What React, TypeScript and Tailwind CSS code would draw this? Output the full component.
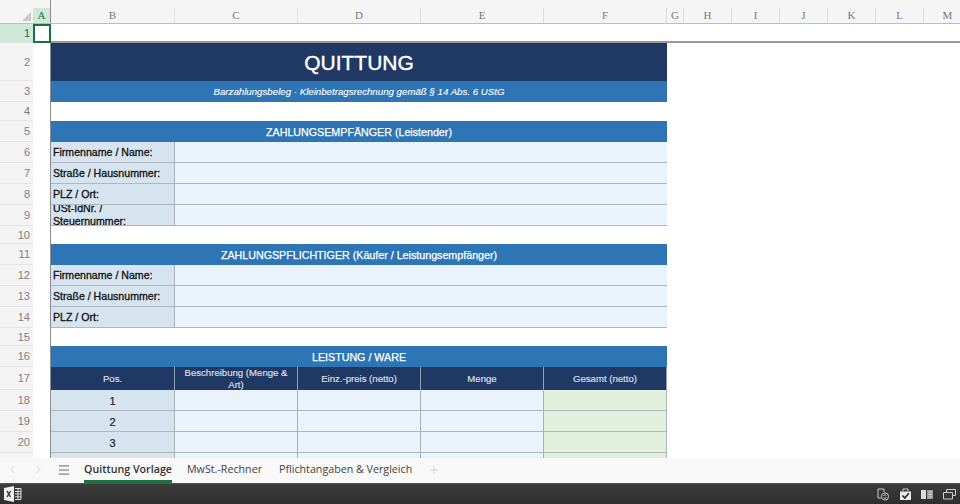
import { ReactNode } from 'react'
import { ChevronLeft, ChevronRight, Menu, Plus } from 'lucide-react'

const COLUMNS: [string, string][] = [
  ['B', 'w-[124px]'], ['C', 'w-[123px]'], ['D', 'w-[123px]'], ['E', 'w-[123px]'], ['F', 'w-[123px]'],
  ['G', 'w-[17px]'], ['H', 'w-[48px]'], ['I', 'w-[48px]'], ['J', 'w-[48px]'], ['K', 'w-[48px]'], ['L', 'w-[48px]'], ['M', 'w-[48px]'],
]

function Row({ num, h, active, children }: { num?: number; h: string; active?: boolean; children?: ReactNode }) {
  return (
    <div className={`flex shrink-0 ${h}`}>
      <div className={`w-[33px] shrink-0 flex items-center justify-end pr-[3px] pt-[1px] text-[11px] border-b border-[#e4e4e4] ${active ? 'bg-[#cfe8d8] text-[#1f6b43]' : 'bg-[#f4f4f4] text-[#808080]'}`}>{num}</div>
      <div className="w-[17px] shrink-0 bg-white" />
      <div className="w-px shrink-0 bg-[#8c8c8c]" />
      <div className="flex flex-1 min-w-0 bg-white">{children}</div>
    </div>
  )
}

function Band({ children, className }: { children: ReactNode; className: string }) {
  return <div className={`w-[616px] flex items-center justify-center pt-[1px] text-white ${className}`}>{children}</div>
}

function LabelRow({ num, h, label, tight }: { num: number; h: string; label: string; tight?: boolean }) {
  return (
    <Row num={num} h={h}>
      <div className={`w-[123px] shrink-0 bg-[#d6e4ef] border-b border-[#aeb7bf] flex items-center pl-[2px] text-[10.6px] text-[#111] [-webkit-text-stroke:0.3px_#111] overflow-hidden ${tight ? 'leading-[13px]' : 'pt-[1px]'}`}>{label}</div>
      <div className="w-px shrink-0 bg-[#a8b0b8]" />
      <div className="w-[492px] bg-[#eaf2fb] border-b border-[#aeb7bf]" />
    </Row>
  )
}

function ItemRow({ num, pos }: { num?: number; pos: string }) {
  return (
    <Row num={num} h="h-[21px]">
      <div className="w-[123px] shrink-0 bg-[#d6e4ef] border-b border-[#aeb7bf] flex items-center justify-center pt-[2px] text-[11px] text-[#222] [-webkit-text-stroke:0.2px_#222]">{pos}</div>
      <div className="w-px shrink-0 bg-[#a8b0b8]" />
      <div className="w-[122px] shrink-0 bg-[#eaf2fb] border-b border-[#aeb7bf]" />
      <div className="w-px shrink-0 bg-[#a8b0b8]" />
      <div className="w-[122px] shrink-0 bg-[#eaf2fb] border-b border-[#aeb7bf]" />
      <div className="w-px shrink-0 bg-[#a8b0b8]" />
      <div className="w-[122px] shrink-0 bg-[#eaf2fb] border-b border-[#aeb7bf]" />
      <div className="w-px shrink-0 bg-[#a8b0b8]" />
      <div className="w-[123px] shrink-0 bg-[#e2efda] border-b border-r border-[#aeb7bf]" />
    </Row>
  )
}

function Head({ w, children }: { w: string; children: ReactNode }) {
  return <div className={`${w} shrink-0 bg-[#1f3864] border-r border-[#8fa0b5] flex items-center justify-center text-center px-[6px] pt-[1px] text-[9.6px] leading-[12px] text-[#d9dee6] [-webkit-text-stroke:0.2px_#d9dee6]`}>{children}</div>
}

export default function App() {
  return (
    <div className="w-[960px] h-[504px] overflow-hidden flex flex-col bg-white font-['Liberation_Sans',Arial,sans-serif]">
      <div className="h-[24px] shrink-0 flex bg-[#f5f5f5] border-b border-[#bdbdbd]">
        <div className="w-[33px] shrink-0 flex items-end justify-end pr-[2px] pb-[2px]">
          <div className="w-0 h-0 border-l-[9px] border-l-transparent border-b-[9px] border-b-[#c9c9c9]" />
        </div>
        <div className="w-[17px] shrink-0 mt-[8px] bg-[#cfe8d8] flex items-center justify-center text-[11px] text-[#1f6b43] font-['Liberation_Serif',serif]">A</div>
        <div className="w-px shrink-0 bg-[#8c8c8c]" />
        {COLUMNS.map(([c, w]) => (
          <div key={c} className={`${w} shrink-0 mt-[8px] border-r border-[#dedede] flex items-center justify-center text-[11px] text-[#777] font-['Liberation_Serif',serif]`}>{c}</div>
        ))}
      </div>

      <div className="relative flex-1 min-h-0 overflow-hidden flex flex-col">
        <div className="absolute left-[33px] top-0 w-[18px] h-[19px] border-2 border-[#1d6f42] pointer-events-none z-10" />
        <Row num={1} h="h-[19px]" active><div className="flex-1 border-b-2 border-[#9a9a9a]" /></Row>
        <Row num={2} h="h-[38px]"><Band className="bg-[#1f3864] text-[21px] [-webkit-text-stroke:0.4px_#fff]">QUITTUNG</Band></Row>
        <Row num={3} h="h-[21px]"><Band className="bg-[#2e75b6] text-[9.7px] italic [-webkit-text-stroke:0.1px_#fff]">Barzahlungsbeleg · Kleinbetragsrechnung gemäß § 14 Abs. 6 UStG</Band></Row>
        <Row num={4} h="h-[19px]" />
        <Row num={5} h="h-[21px]"><Band className="bg-[#2e75b6] text-[10.7px] [-webkit-text-stroke:0.25px_#fff]">ZAHLUNGSEMPFÄNGER (Leistender)</Band></Row>
        <LabelRow num={6} h="h-[21px]" label="Firmenname / Name:" />
        <LabelRow num={7} h="h-[21px]" label="Straße / Hausnummer:" />
        <LabelRow num={8} h="h-[21px]" label="PLZ / Ort:" />
        <LabelRow num={9} h="h-[21px]" label="USt-IdNr. / Steuernummer:" tight />
        <Row num={10} h="h-[18px]" />
        <Row num={11} h="h-[21px]"><Band className="bg-[#2e75b6] text-[10.7px] [-webkit-text-stroke:0.25px_#fff]">ZAHLUNGSPFLICHTIGER (Käufer / Leistungsempfänger)</Band></Row>
        <LabelRow num={12} h="h-[21px]" label="Firmenname / Name:" />
        <LabelRow num={13} h="h-[21px]" label="Straße / Hausnummer:" />
        <LabelRow num={14} h="h-[21px]" label="PLZ / Ort:" />
        <Row num={15} h="h-[18px]" />
        <Row num={16} h="h-[21px]"><Band className="bg-[#2e75b6] text-[10.7px] [-webkit-text-stroke:0.25px_#fff]">LEISTUNG / WARE</Band></Row>
        <Row num={17} h="h-[23px]">
          <Head w="w-[124px]">Pos.</Head>
          <Head w="w-[123px]">Beschreibung (Menge &amp; Art)</Head>
          <Head w="w-[123px]">Einz.-preis (netto)</Head>
          <Head w="w-[123px]">Menge</Head>
          <Head w="w-[123px]">Gesamt (netto)</Head>
        </Row>
        <ItemRow num={18} pos="1" />
        <ItemRow num={19} pos="2" />
        <ItemRow num={20} pos="3" />
        <ItemRow pos="" />
      </div>

      <div className="h-[25px] shrink-0 flex items-center bg-[#f8f8f8] font-['Open_Sans',sans-serif] text-[10.7px] text-[#444] whitespace-nowrap">
        <ChevronLeft size={13} strokeWidth={1.5} className="ml-[6px] mb-[2px] text-[#c8c8c8]" />
        <ChevronRight size={13} strokeWidth={1.5} className="ml-[13px] mb-[2px] text-[#c8c8c8]" />
        <Menu size={14} strokeWidth={1.5} className="ml-[12px] mb-[2px] text-[#555]" />
        <div className="ml-[13px] h-full w-[88px] flex items-center justify-center font-semibold text-[#333] border-b-[3px] border-[#1d6f42]">Quittung Vorlage</div>
        <span className="ml-[15px] pb-[2px]">MwSt.-Rechner</span>
        <span className="ml-[17px] pb-[2px]">Pflichtangaben &amp; Vergleich</span>
        <Plus size={12} strokeWidth={1.2} className="ml-[16px] mb-[2px] text-[#c0c0c0]" />
      </div>

      <div className="h-[21px] shrink-0 flex items-center bg-gradient-to-b from-[#3c3c3c] to-[#2e2e2e] border-t border-[#555]">
        <svg width="18" height="16" viewBox="0 0 18 16" className="ml-[4px]">
          <path d="M0 2 L10 0 V16 L0 14 Z" fill="#eee" />
          <path d="M3 5 L6.5 11 M6.5 5 L3 11" stroke="#333" strokeWidth="1.4" />
          <path d="M11 2.5 H17 V13.5 H11 M11 5.5 H17 M11 8 H17 M11 10.8 H17 M14 2.5 V13.5" stroke="#ddd" strokeWidth="1" fill="none" />
        </svg>
        <div className="ml-auto flex items-center gap-[9px] pr-[4px]">
          <svg width="13" height="13" viewBox="0 0 13 13" fill="none" stroke="#ccc" strokeWidth="1">
            <path d="M1 1 H7 V4 M1 1 V10 H4" />
            <circle cx="8" cy="8.5" r="3.6" />
            <path d="M6.5 8 A1.7 1.7 0 0 1 9.4 7.4 M9.5 9 A1.7 1.7 0 0 1 6.6 9.6" />
          </svg>
          <svg width="13" height="13" viewBox="0 0 13 13">
            <path d="M1 3.5 H12 V12 H1 Z" fill="#e8e8e8" />
            <path d="M4 3.5 V1 H9 V3.5" stroke="#ccc" fill="none" />
            <path d="M3.5 7.5 L5.8 10 L9.8 5.2" stroke="#222" strokeWidth="1.5" fill="none" />
          </svg>
          <svg width="13" height="11" viewBox="0 0 13 11">
            <path d="M0 1 H5 V10 H0 Z" fill="#ddd" />
            <path d="M6 1 H12 V10 H6 Z" fill="#999" />
            <path d="M7.5 3 H11 M7.5 5.5 H11 M7.5 8 H11" stroke="#eee" strokeWidth="0.8" />
          </svg>
          <svg width="13" height="11" viewBox="0 0 13 11" fill="none" stroke="#ccc" strokeWidth="1">
            <path d="M3.5 3 V0.5 H12.5 V6.5 H9.5" />
            <path d="M0.5 3.5 H9.5 V10 H0.5 Z" />
          </svg>
        </div>
      </div>
    </div>
  )
}
